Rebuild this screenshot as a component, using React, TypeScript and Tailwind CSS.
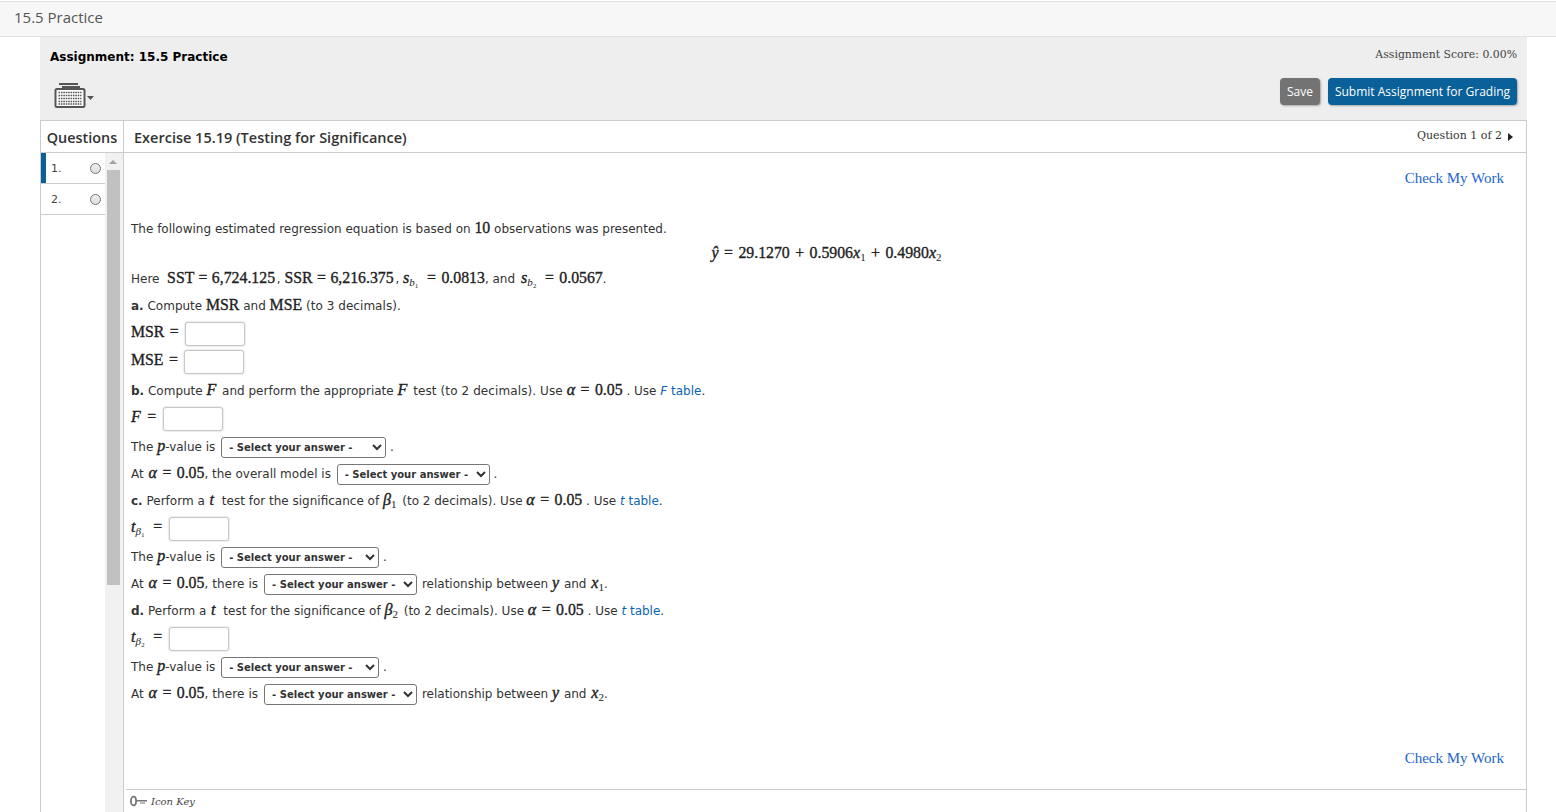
import React from "react";

const body = "font-['DejaVu_Sans',Verdana,sans-serif]";
const open = "font-['Open_Sans',sans-serif]";
const serif = "font-['DejaVu_Serif',serif]";

function N({ children, w = false, c = "" }: { children: React.ReactNode; w?: boolean; c?: string }) {
  return <span className={`font-['Liberation_Serif',serif] text-[15.800px] text-[#222] [-webkit-text-stroke:0.35px_#222] ${w ? "[word-spacing:1.500px]" : "[word-spacing:0.500px]"} ${c}`}>{children}</span>;
}
function V({ children, c = "" }: { children: React.ReactNode; c?: string }) {
  return <span className={`font-['Liberation_Serif',serif] text-[16px] italic text-[#222] [-webkit-text-stroke:0.4px_#222] ${c}`}>{children}</span>;
}
function Sub({ children }: { children: React.ReactNode }) {
  return <sub className="static font-['Liberation_Serif',serif] text-[11px] leading-none align-[-3px] text-[#222]">{children}</sub>;
}
function L({ children }: { children: React.ReactNode }) {
  return <a className="text-[#0a64b4]">{children}</a>;
}
function Row({ h, children }: { h: string; children: React.ReactNode }) {
  return (
    <div className={`flex items-center whitespace-pre ${h}`}>
      <div>{children}</div>
    </div>
  );
}
function Input() {
  return <input aria-label="answer" className="ml-[1px] h-[24px] w-[60px] rounded-[3px] border border-[#c8c8c8] bg-white align-middle shadow-[0_0_2px_rgba(0,0,0,0.25)]" />;
}
function Sel({ w }: { w: string }) {
  return (
    <select className={`${w} ml-[2px] h-[21px] rounded-[3px] border border-[#767676] bg-white pl-[3px] align-middle text-[10px] font-bold text-[#333] ${body}`}>
      <option>- Select your answer -</option>
    </select>
  );
}
function Keyboard() {
  return (
    <svg width="40" height="26" viewBox="0 0 40 26" className="block">
      <path d="M5 1h19v2H5z" fill="#555" />
      <path d="M8 4h18v2H8z" fill="#555" />
      <rect x="1.500" y="7" width="29" height="18" rx="1.500" fill="#fff" stroke="#555" strokeWidth="2" />
      <path d="M4.500 10.500h23M4.500 13.500h23M4.500 16.500h23M4.500 19.500h23M4.500 22h23" stroke="#555" strokeWidth="1.600" strokeDasharray="1.600 0.800" />
      <path d="M33 14h7l-3.500 4z" fill="#555" />
    </svg>
  );
}
function KeyIcon() {
  return (
    <svg width="18" height="12" viewBox="0 0 18 12" className="block">
      <ellipse cx="3.500" cy="6" rx="2.600" ry="4.400" fill="none" stroke="#777" strokeWidth="1.800" />
      <path d="M6 5h11v1.500H6zM10 7.500h5v1h-5z" fill="#777" />
    </svg>
  );
}
function QRow({ n, active }: { n: string; active?: boolean }) {
  return (
    <div className="flex h-[31px] items-center border-b border-[#ccc] bg-white">
      <div className={`h-full w-[5px] ${active ? "bg-[#0a6098]" : ""}`} />
      <span className={`ml-[5px] mt-[2px] flex-1 text-[11px] text-[#444] ${body}`}>{n}</span>
      <span className="mr-[4px] h-[11px] w-[11px] rounded-full border border-[#777] bg-[linear-gradient(#eee,#ddd)]" />
    </div>
  );
}

export default function App() {
  return (
    <div className="h-[812px] overflow-hidden bg-white">
      <div className={`mt-[1px] flex h-[36px] items-center border-y border-[#e2e2e2] bg-[#f7f7f7] pb-[3px] pl-[14px] text-[15px] text-[#555] ${open}`}>
        15.5 Practice
      </div>
      <div className="ml-[40px] mr-[29px]">
        <div className="h-[83px] bg-[#eeeeee] pl-[10px] pr-[10px]">
          <div className="flex h-[38px] items-center justify-between pt-[2px]">
            <span className={`text-[12px] font-bold text-black ${body}`}>Assignment: 15.5 Practice</span>
            <span className={`-mt-[3px] text-[10.900px] text-[#444] ${serif}`}>Assignment Score: 0.00%</span>
          </div>
          <div className="flex items-start justify-between">
            <div className="ml-[4px] mt-[7px]"><Keyboard /></div>
            <div className={`mt-[3px] flex gap-[8px] text-[12px] text-white ${open}`}>
              <button className="flex h-[27px] w-[40px] items-center justify-center rounded-[4px] bg-[#737373] shadow-[1px_1px_2px_rgba(0,0,0,0.3)]">Save</button>
              <button className="flex h-[27px] w-[189px] items-center justify-center rounded-[4px] bg-[#0a6098] shadow-[1px_1px_2px_rgba(0,0,0,0.3)]">Submit Assignment for Grading</button>
            </div>
          </div>
        </div>
        <div className="flex h-[692px] border border-b-0 border-[#ccc]">
          <div className="flex w-[83px] flex-none flex-col border-r border-[#ccc]">
            <div className={`flex h-[32px] flex-none items-center justify-center border-b border-[#ccc] pt-[2px] text-[14.400px] font-semibold text-[#333] ${open}`}>Questions</div>
            <div className="flex min-h-0 flex-1">
              <div className="w-[64px]">
                <QRow n="1." active />
                <QRow n="2." />
              </div>
              <div className="flex w-[18px] flex-col items-center bg-[#f1f1f1] pr-[2px]">
                <div className="mt-[7px] h-0 w-0 border-x-[4px] border-b-[4px] border-x-transparent border-b-[#a3a3a3]" />
                <div className="mt-[6px] h-[415px] w-[13px] bg-[#c1c1c1]" />
              </div>
            </div>
          </div>
          <div className="flex min-w-0 flex-1 flex-col">
            <div className="flex h-[32px] flex-none items-center justify-between border-b border-[#ccc] pl-[10px] pr-[13px]">
              <span className={`pt-[2px] text-[14.500px] font-semibold text-[#333] ${open}`}>Exercise 15.19 (Testing for Significance)</span>
              <span className={`flex items-center gap-[6px] text-[11px] text-[#333] ${serif}`}>
                Question 1 of 2
                <span className="h-0 w-0 border-y-[4px] border-l-[5px] border-y-transparent border-l-[#222]" />
              </span>
            </div>
            <div className={`min-h-0 flex-1 pl-[7px] text-[12px] text-[#333] ${body}`}>
              <div className="flex h-[62px] justify-end pr-[22px] pt-[14px]">
                <a className="font-['Liberation_Serif',serif] text-[15px] text-[#1a66c8]">Check My Work</a>
              </div>
              <Row h="h-[25px]"><span>The following estimated regression equation is based on </span><N>10</N><span> observations was presented.</span></Row>
              <Row h="h-[25px] justify-center pr-[4px]">
                <V>ŷ</V><N w> = 29.1270 + 0.5906</N><V>x</V><Sub>1</Sub><N w> + 0.4980</N><V>x</V><Sub>2</Sub>
              </Row>
              <Row h="h-[25px]"><span>Here  </span><N>SST = 6,724.125</N><span className="-ml-[2px]"> , </span><N>SSR = 6,216.375</N><span className="-ml-[2px]"> , </span><V>s</V><Sub><i>b</i>₁</Sub><N w c="ml-[3px]"> = 0.0813</N><span>, and </span><V c="ml-[2px]">s</V><Sub><i>b</i>₂</Sub><N w c="ml-[3px]"> = 0.0567</N><span>.</span></Row>
              <Row h="h-[29px]"><b>a.</b><span> Compute </span><N>MSR</N><span> and </span><N>MSE</N><span className="tracking-[0.05px]"> (to 3 decimals).</span></Row>
              <Row h="h-[28px]"><N w>MSR = </N><Input /></Row>
              <Row h="h-[28px]"><N w>MSE = </N><Input /></Row>
              <Row h="h-[29px]"><b>b.</b><span> Compute </span><V c="pr-[2px]">F</V><span> and perform the appropriate </span><V c="pr-[2px]">F</V><span className="tracking-[0.1px]"> test (to 2 decimals). Use </span><V>α</V><N w> = 0.05</N><span> . Use </span><L><i>F</i> table</L><span>.</span></Row>
              <Row h="h-[28px]"><V c="pr-[1px]">F</V><N w> = </N><Input /></Row>
              <Row h="h-[27px]"><span>The </span><V>p</V><span>-value is </span><Sel w="w-[165px]" /><span> .</span></Row>
              <Row h="h-[27px]"><span>At </span><V c="ml-[1px]">α</V><N w> = 0.05</N><span>, the overall model is </span><Sel w="w-[153px]" /><span> .</span></Row>
              <Row h="h-[28px]"><b>c.</b><span> Perform a </span><V c="ml-[1px] pr-[4px]">t</V><span> test for the significance of </span><V>β</V><Sub>1</Sub><span className="ml-[2px]"> (to 2 decimals). Use </span><V>α</V><N w> = 0.05</N><span> . Use </span><L><i>t</i> table</L><span>.</span></Row>
              <Row h="h-[28px]"><V>t</V><Sub><i>β</i>₁</Sub><span className="ml-[3px]"><N w> = </N></span><Input /></Row>
              <Row h="h-[27px]"><span>The </span><V>p</V><span>-value is </span><Sel w="w-[158px]" /><span> .</span></Row>
              <Row h="h-[27px]"><span>At </span><V c="ml-[1px]">α</V><N w> = 0.05</N><span className="tracking-[0.1px]">, there is </span><Sel w="w-[153px]" /><span className="ml-[1px]"> relationship between </span><V c="pr-[1px]">y</V><span> and </span><V c="ml-[1px]">x</V><Sub>1</Sub><span>.</span></Row>
              <Row h="h-[28px]"><b>d.</b><span> Perform a </span><V c="ml-[1px] pr-[4px]">t</V><span> test for the significance of </span><V>β</V><Sub>2</Sub><span className="ml-[2px]"> (to 2 decimals). Use </span><V>α</V><N w> = 0.05</N><span> . Use </span><L><i>t</i> table</L><span>.</span></Row>
              <Row h="h-[28px]"><V>t</V><Sub><i>β</i>₂</Sub><span className="ml-[3px]"><N w> = </N></span><Input /></Row>
              <Row h="h-[27px]"><span>The </span><V>p</V><span>-value is </span><Sel w="w-[158px]" /><span> .</span></Row>
              <Row h="h-[27px]"><span>At </span><V c="ml-[1px]">α</V><N w> = 0.05</N><span className="tracking-[0.1px]">, there is </span><Sel w="w-[153px]" /><span className="ml-[1px]"> relationship between </span><V c="pr-[1px]">y</V><span> and </span><V c="ml-[1px]">x</V><Sub>2</Sub><span>.</span></Row>
              <div className="flex h-[61px] items-end justify-end pr-[22px]">
                <a className="font-['Liberation_Serif',serif] text-[15px] leading-[18px] text-[#1a66c8]">Check My Work</a>
              </div>
              <div className="mt-[22px] flex h-[23px] items-center gap-[3px] border-t border-[#ccc] -ml-[5px] pl-[4px]">
                <KeyIcon />
                <span className={`text-[10px] italic text-[#444] ${serif}`}>Icon Key</span>
              </div>
            </div>
          </div>
        </div>
      </div>
    </div>
  );
}
